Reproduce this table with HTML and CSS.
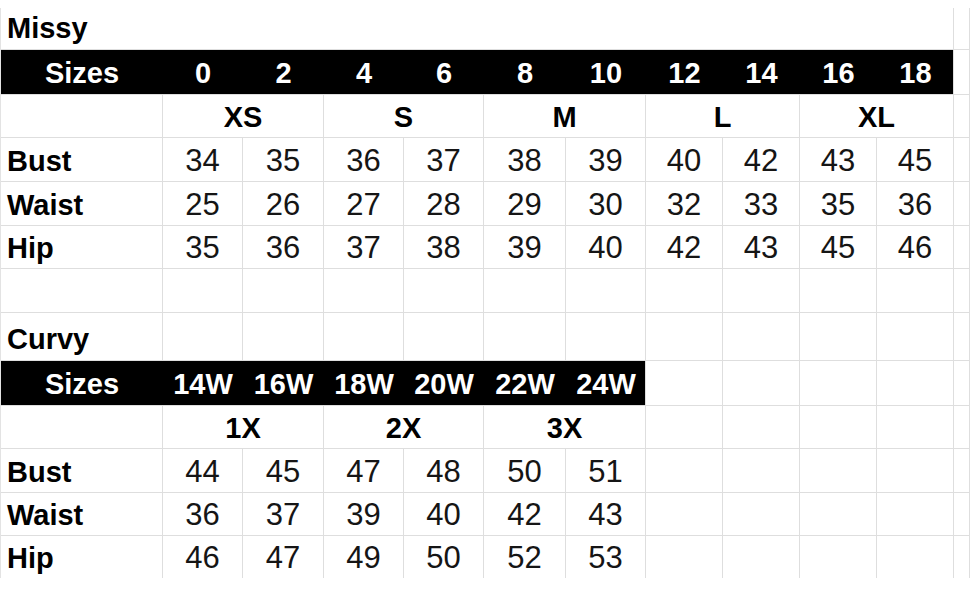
FILE: index.html
```html
<!DOCTYPE html>
<html>
<head>
<meta charset="utf-8">
<link rel="stylesheet" href="styles.css">
</head>
<body>
<div class="sheet">
  <!-- Row 1: Missy -->
  <div class="c label title span11">Missy</div>
  <div class="c"></div>

  <!-- Row 2: Missy sizes header -->
  <div class="c band span11">
    <div class="band-grid missy-band">
      <span class="bh">Sizes</span><span>0</span><span>2</span><span>4</span><span>6</span><span>8</span><span>10</span><span>12</span><span>14</span><span>16</span><span>18</span>
    </div>
  </div>
  <div class="c"></div>

  <!-- Row 3: letter sizes -->
  <div class="c"></div>
  <div class="c grp span2">XS</div>
  <div class="c grp span2">S</div>
  <div class="c grp span2">M</div>
  <div class="c grp span2">L</div>
  <div class="c grp span2">XL</div>
  <div class="c"></div>

  <!-- Row 4: Bust -->
  <div class="c label">Bust</div>
  <div class="c n">34</div><div class="c n">35</div><div class="c n">36</div><div class="c n">37</div><div class="c n">38</div><div class="c n">39</div><div class="c n">40</div><div class="c n">42</div><div class="c n">43</div><div class="c n">45</div>
  <div class="c"></div>

  <!-- Row 5: Waist -->
  <div class="c label">Waist</div>
  <div class="c n">25</div><div class="c n">26</div><div class="c n">27</div><div class="c n">28</div><div class="c n">29</div><div class="c n">30</div><div class="c n">32</div><div class="c n">33</div><div class="c n">35</div><div class="c n">36</div>
  <div class="c"></div>

  <!-- Row 6: Hip -->
  <div class="c label">Hip</div>
  <div class="c n">35</div><div class="c n">36</div><div class="c n">37</div><div class="c n">38</div><div class="c n">39</div><div class="c n">40</div><div class="c n">42</div><div class="c n">43</div><div class="c n">45</div><div class="c n">46</div>
  <div class="c"></div>

  <!-- Row 7: empty -->
  <div class="c"></div><div class="c"></div><div class="c"></div><div class="c"></div><div class="c"></div><div class="c"></div><div class="c"></div><div class="c"></div><div class="c"></div><div class="c"></div><div class="c"></div><div class="c"></div>

  <!-- Row 8: Curvy -->
  <div class="c label title">Curvy</div>
  <div class="c"></div><div class="c"></div><div class="c"></div><div class="c"></div><div class="c"></div><div class="c"></div><div class="c"></div><div class="c"></div><div class="c"></div><div class="c"></div><div class="c"></div>

  <!-- Row 9: Curvy sizes header -->
  <div class="c band span7">
    <div class="band-grid curvy-band">
      <span class="bh">Sizes</span><span>14W</span><span>16W</span><span>18W</span><span>20W</span><span>22W</span><span>24W</span>
    </div>
  </div>
  <div class="c"></div><div class="c"></div><div class="c"></div><div class="c"></div><div class="c"></div>

  <!-- Row 10: X sizes -->
  <div class="c"></div>
  <div class="c grp span2">1X</div>
  <div class="c grp span2">2X</div>
  <div class="c grp span2">3X</div>
  <div class="c"></div><div class="c"></div><div class="c"></div><div class="c"></div><div class="c"></div>

  <!-- Row 11: Bust -->
  <div class="c label">Bust</div>
  <div class="c n">44</div><div class="c n">45</div><div class="c n">47</div><div class="c n">48</div><div class="c n">50</div><div class="c n">51</div>
  <div class="c"></div><div class="c"></div><div class="c"></div><div class="c"></div><div class="c"></div>

  <!-- Row 12: Waist -->
  <div class="c label">Waist</div>
  <div class="c n">36</div><div class="c n">37</div><div class="c n">39</div><div class="c n">40</div><div class="c n">42</div><div class="c n">43</div>
  <div class="c"></div><div class="c"></div><div class="c"></div><div class="c"></div><div class="c"></div>

  <!-- Row 13: Hip -->
  <div class="c label last">Hip</div>
  <div class="c n last">46</div><div class="c n last">47</div><div class="c n last">49</div><div class="c n last">50</div><div class="c n last">52</div><div class="c n last">53</div>
  <div class="c last"></div><div class="c last"></div><div class="c last"></div><div class="c last"></div><div class="c last"></div>
</div>
</body>
</html>
```

FILE: styles.css
```css
html, body {
  margin: 0;
  padding: 0;
  background: #ffffff;
}

body {
  font-family: "Liberation Sans", Arial, sans-serif;
  color: #111111;
}

.sheet {
  display: grid;
  grid-template-columns: 162px 80px 81px 80px 80px 82px 80px 77px 77px 77px 77px 1fr;
  grid-template-rows: 42px 45px 43px 44px 44px 43px 44px 48px 45px 43px 44px 43px 42px;
  margin-top: 8px;
  border-left: 1px solid #e3e3e3;
  width: 969px;
}

.c {
  box-sizing: border-box;
  border-right: 1px solid #dedede;
  border-bottom: 1px solid #dedede;
  display: flex;
  align-items: flex-end;
  justify-content: center;
  padding-bottom: 5px;
  line-height: 1;
  min-width: 0;
}

.c.last {
  border-bottom: none;
}

.span2 { grid-column: span 2; }
.span7 { grid-column: span 7; }
.span11 { grid-column: span 11; }

.label {
  justify-content: flex-start;
  padding-left: 6px;
  font-weight: bold;
  font-size: 29px;
  color: #000000;
}

.title {
  padding-bottom: 6px;
}

.grp {
  font-weight: bold;
  font-size: 29px;
  color: #000000;
}

.n {
  font-size: 31px;
  color: #151515;
}

.band {
  background: #000000;
  padding: 0;
  align-items: stretch;
  justify-content: stretch;
}

.band-grid {
  display: grid;
  width: 100%;
  align-items: end;
  justify-items: center;
  padding-bottom: 6px;
  box-sizing: border-box;
  color: #ffffff;
  font-weight: bold;
  font-size: 29px;
  line-height: 1;
}

.missy-band {
  grid-template-columns: 162px 80px 81px 80px 80px 82px 80px 77px 77px 77px 77px;
}

.curvy-band {
  grid-template-columns: 162px 80px 81px 80px 80px 82px 80px;
}
```
